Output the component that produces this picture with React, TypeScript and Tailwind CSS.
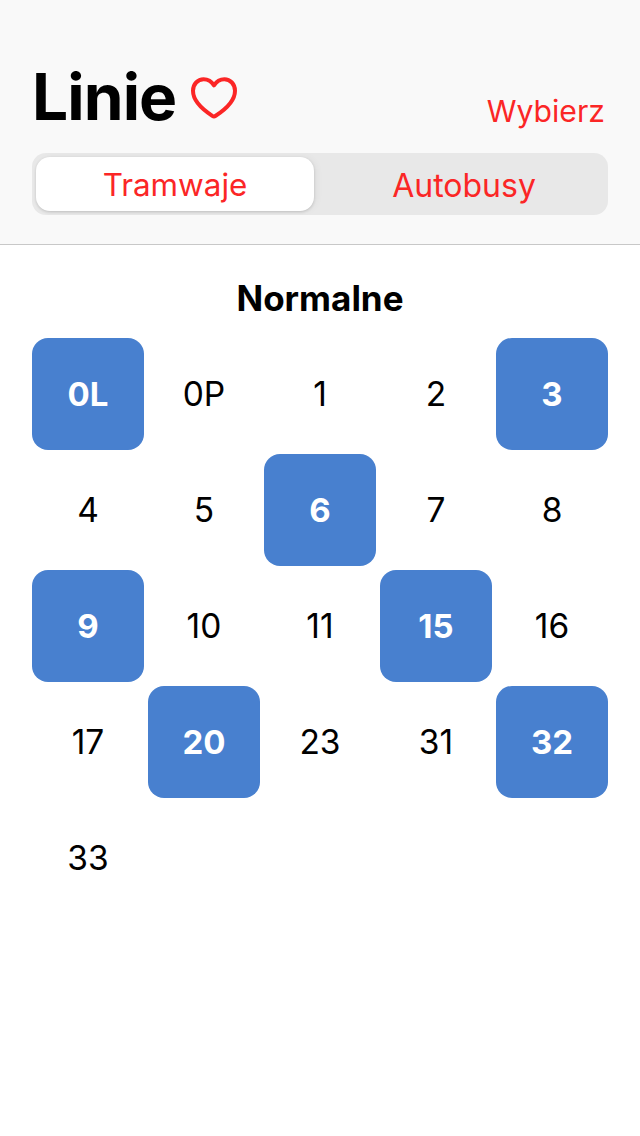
const fontStack = "font-['Inter','Liberation_Sans',sans-serif]";

const rows: [string, boolean][] = [
  ["0L", true], ["0P", false], ["1", false], ["2", false], ["3", true],
  ["4", false], ["5", false], ["6", true], ["7", false], ["8", false],
  ["9", true], ["10", false], ["11", false], ["15", true], ["16", false],
  ["17", false], ["20", true], ["23", false], ["31", false], ["32", true],
  ["33", false],
];

function Heart() {
  return (
    <svg width="48" height="46" viewBox="0 0 48 46" fill="none" className="ml-[14px] mt-[1px]">
      <path
        d="M24 41.5C23.5 41.5 22.9 41.2 22.3 40.8C11 33.5 3 25.5 3 15.8C3 9 7.8 4.3 13.6 4.3C18.2 4.3 21.6 6.6 24 10.4C26.4 6.6 29.8 4.3 34.4 4.3C40.2 4.3 45 9 45 15.8C45 25.5 37 33.5 25.7 40.8C25.1 41.2 24.5 41.5 24 41.5Z"
        stroke="#fb2626"
        strokeWidth="4"
        strokeLinejoin="round"
      />
    </svg>
  );
}

export default function App() {
  return (
    <div className={`${fontStack} w-[640px] h-[1136px] bg-white flex flex-col`}>
      <header className="h-[245px] bg-[#f9f9f9] border-b border-[#c8c8c8] px-[32px] pt-[62px] flex flex-col">
        <div className="h-[91px] flex items-start justify-between">
          <div className="flex items-center h-[70px]">
            <span className="text-[64px] leading-[70px] font-bold text-black tracking-[-0.9px]">Linie</span>
            <Heart />
          </div>
          <span className="text-[30.2px] leading-[38px] text-[#fb2626] mt-[30px] mr-[3px]">Wybierz</span>
        </div>
        <div className="h-[62px] rounded-[14px] bg-[#e8e8e8] flex p-[4px] overflow-hidden">
          <div className="w-[278px] h-[54px] pt-[3px] bg-white rounded-[14px] shadow-[0_1px_3px_rgba(0,0,0,0.16),3px_0_7px_rgba(0,0,0,0.04)] flex items-center justify-center text-[31.4px] text-[#fb2626]">
            Tramwaje
          </div>
          <div className="flex-1 pl-[10px] pt-[3px] flex items-center justify-center text-[32px] text-[#fb2626]">Autobusy</div>
        </div>
      </header>
      <main className="px-[32px] pt-[31px]">
        <h2 className="text-center text-[35px] leading-[44px] font-bold text-black h-[62px]">Normalne</h2>
        <div className="grid grid-cols-5 gap-[4px]">
          {rows.map(([label, active]) => (
            <div
              key={label}
              className={
                active
                  ? "h-[112px] pt-[2px] rounded-[16px] bg-[#4880cf] text-white font-bold text-[33px] flex items-center justify-center"
                  : "h-[112px] text-black font-[375] text-[33.5px] flex items-center justify-center"
              }
            >
              {label}
            </div>
          ))}
        </div>
      </main>
    </div>
  );
}
